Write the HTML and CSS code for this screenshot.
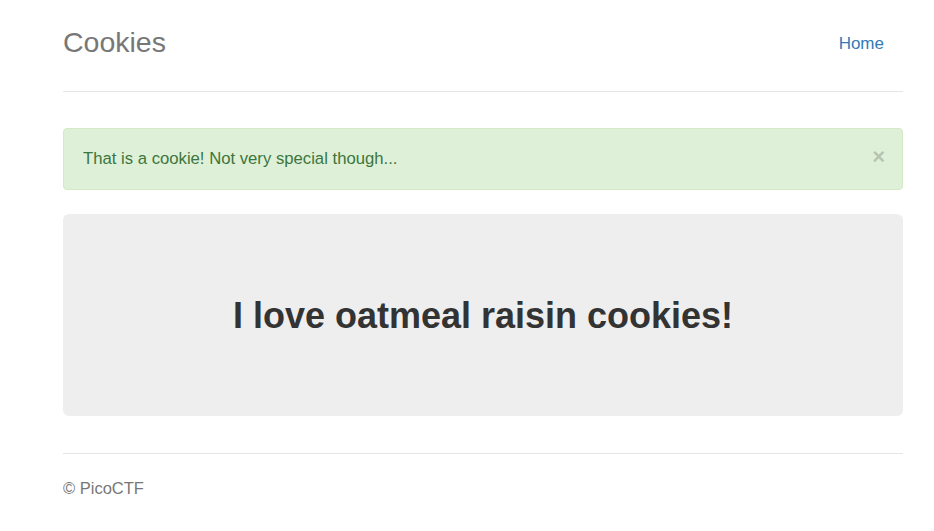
FILE: index.html
```html
<!DOCTYPE html>
<html lang="en">
<head>
<meta charset="utf-8">
<title>Cookies</title>
<link rel="stylesheet" href="styles.css">
</head>
<body>
<div class="container">
  <div class="header">
    <h3 class="brand">Cookies</h3>
    <nav class="nav">
      <a class="nav-link" href="#">Home</a>
    </nav>
  </div>

  <div class="alert">
    <span class="alert-text">That is a cookie! Not very special though...</span>
    <button class="close" type="button" aria-label="Close">&times;</button>
  </div>

  <div class="jumbotron">
    <h1 class="jumbo-title">I love oatmeal raisin cookies!</h1>
  </div>

  <footer class="footer">
    <p class="footer-text">&copy; PicoCTF</p>
  </footer>
</div>
</body>
</html>
```

FILE: styles.css
```css
* { box-sizing: border-box; }

html, body {
  margin: 0;
  padding: 0;
  background: #fff;
}

body {
  font-family: "Liberation Sans", Arial, Helvetica, sans-serif;
  font-size: 16.7px;
  line-height: 24px;
  color: #333;
}

.container {
  width: 840px;
  margin: 0 0 0 63px;
}

.header {
  display: flex;
  align-items: center;
  justify-content: space-between;
  height: 92px;
  padding-top: 22px;
  padding-bottom: 29px;
  border-bottom: 1px solid #e5e5e5;
}

.brand {
  margin: 0;
  font-size: 28.5px;
  font-weight: 400;
  line-height: 40px;
  color: #777;
}

.nav {
  display: flex;
}

.nav-link {
  display: block;
  padding: 10px 19px 7px 17px;
  color: #337ab7;
  text-decoration: none;
  font-size: 17px;
  line-height: 23px;
}

.alert {
  display: flex;
  align-items: center;
  justify-content: space-between;
  margin-top: 36px;
  padding: 18px 19px 18px 19px;
  background: #dff0d8;
  border: 1px solid #d6e9c6;
  border-radius: 4px;
  color: #3c763d;
}

.alert-text {
  line-height: 24px;
  font-size: 16.7px;
}

.close {
  padding: 0;
  margin: 0 -2px 0 0;
  border: 0;
  background: transparent;
  font-family: "Liberation Sans", Arial, sans-serif;
  font-size: 22px;
  font-weight: 700;
  line-height: 24px;
  color: #000;
  opacity: 0.18;
  cursor: pointer;
  position: relative;
  top: -2px;
}

.jumbotron {
  margin-top: 24px;
  padding: 79px 20px 77px;
  background: #eee;
  border-radius: 6px;
  text-align: center;
}

.jumbo-title {
  margin: 0;
  font-size: 36px;
  font-weight: 700;
  line-height: 46px;
  color: #333;
}

.footer {
  margin-top: 37px;
  border-top: 1px solid #e5e5e5;
  padding-top: 23px;
}

.footer-text {
  margin: 0;
  color: #777;
  font-size: 16.5px;
  line-height: 23px;
}
```
